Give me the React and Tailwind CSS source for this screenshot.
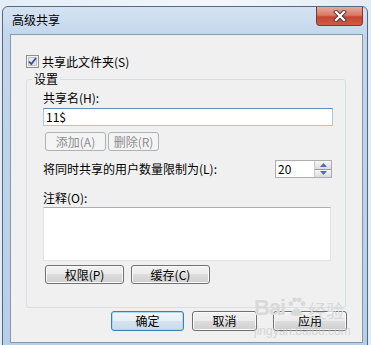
import React from 'react';

const grayBtn =
  'flex items-center justify-center rounded-[3px] border border-[#707070] bg-[linear-gradient(180deg,#f2f2f2_0%,#ebebeb_50%,#dddddd_50%,#cfcfcf_100%)] shadow-[inset_0_0_0_1px_#fbfbfb] text-[12px] leading-none text-black';

const disabledBtn =
  'flex items-center justify-center rounded-[3px] border border-[#adb2b5] bg-[#f4f4f4] text-[12px] leading-none text-[#8d8d8d]';

const CheckBox = () => (
  <svg width="13" height="13" viewBox="0 0 13 13">
    <rect x="0.5" y="0.5" width="12" height="12" fill="#f4f4f4" stroke="#8e8f8f" />
    <rect x="2.5" y="2.5" width="8" height="8" fill="#e6e6e6" stroke="#c4c4c4" />
    <path d="M3 6.5 L5.3 9 L10 3" fill="none" stroke="#3d4f95" strokeWidth="1.8" />
  </svg>
);

const CloseX = () => (
  <svg width="14" height="12" viewBox="0 0 14 12">
    <path d="M3 2 L11 10 M11 2 L3 10" stroke="#4a3a3a" strokeWidth="4.2" strokeLinecap="square" />
    <path d="M3 2 L11 10 M11 2 L3 10" stroke="#ffffff" strokeWidth="2.2" strokeLinecap="square" />
  </svg>
);

const Spinner = () => (
  <div className="flex w-[57px] h-[18px] border border-[#abadb3] bg-white">
    <div className="flex-1 flex items-center pl-[2px] text-[12px] leading-none">20</div>
    <div className="w-[17px] flex flex-col border-l border-[#c9c9c9] bg-[#e9e9e9]">
      <div className="flex-1 flex items-center justify-center border-b border-[#9a9a9a] bg-[linear-gradient(180deg,#f6f6f6,#dcdcdc)]">
        <svg width="7" height="4" viewBox="0 0 7 4"><path d="M0 4 L3.5 0 L7 4 Z" fill="#4d6fb3" /></svg>
      </div>
      <div className="flex-1 flex items-center justify-center bg-[linear-gradient(180deg,#f6f6f6,#dcdcdc)]">
        <svg width="7" height="4" viewBox="0 0 7 4"><path d="M0 0 L3.5 4 L7 0 Z" fill="#4d6fb3" /></svg>
      </div>
    </div>
  </div>
);

// baidu jingyan watermark, drawn over the bottom-right corner
const Watermark = () => (
  <div className="absolute left-[243px] top-[262px] flex flex-col items-start text-[#d9d9d9] pointer-events-none font-['Liberation_Sans',sans-serif]">
    <div className="flex items-end gap-[1px]">
      <span className="text-[22px] font-bold leading-none tracking-[-1px]">Bai</span>
      <svg width="21" height="21" viewBox="0 0 22 22" className="mb-[1px]">
        <circle cx="5" cy="7" r="2.5" fill="#d9d9d9" />
        <circle cx="9" cy="3" r="2.5" fill="#d9d9d9" />
        <circle cx="14" cy="3" r="2.5" fill="#d9d9d9" />
        <circle cx="18" cy="7" r="2.5" fill="#d9d9d9" />
        <path d="M4 18 Q11 6 18 18 Q11 22 4 18 Z" fill="#d9d9d9" />
      </svg>
      <span className="text-[18px] leading-none font-['Noto_Sans_CJK_SC',sans-serif]">经验</span>
    </div>
    <span className="text-[12px] leading-none mt-[6px] text-[#c9c9c9]/70">jingyan.baidu.com</span>
  </div>
);

export default function App() {
  return (
    <div className="w-[371px] h-[345px] overflow-hidden bg-[linear-gradient(90deg,#e4edf6,#f3f7fb_60%,#e2ecf5)] font-['Noto_Sans_CJK_SC',sans-serif]">
      <div className="ml-[2px] mt-[6px] w-[366px] h-[345px] rounded-t-[6px] border border-[#56697e] bg-[linear-gradient(180deg,#d4e3f2_0px,#c3d7ec_28px,#b6cfe9_100%)] pl-[7px] pr-[4px] flex flex-col">
        <div className="h-[27px] flex justify-between items-start">
          <span className="pl-[2px] pt-[6px] text-[12px] leading-[14px] text-black">高级共享</span>
          <div className="w-[47px] h-[19px] rounded-b-[4px] border border-t-0 border-[#7d3a31] bg-[linear-gradient(180deg,#e9a99a_0%,#d97a66_45%,#c64532_55%,#d05a44_100%)] flex items-center justify-center">
            <CloseX />
          </div>
        </div>

        <div className="relative h-[309px] border border-[#8598ae] bg-[#f0f0f0] text-[12px] leading-[14px] text-black">
          <div className="ml-[15px] mt-[20px] h-[13px] flex items-center gap-[3px]">
            <CheckBox />
            <span>共享此文件夹(S)</span>
          </div>

          <fieldset className="ml-[15px] mt-[4px] w-[320px] h-[236px] border border-[#d5dfe5] rounded-[3px]">
            <legend className="ml-[5px] px-[2px] leading-[14px]">设置</legend>
            <div className="pl-[16px] flex flex-col">
              <span className="mt-[5px]">共享名(H):</span>
              <div className="mt-[3px] w-[290px] h-[18px] border border-[#a9c6e3] border-t-[#5d8dbb] bg-white flex items-center pl-[2px]">
                11$
              </div>
              <div className="mt-[6px] ml-[2px] flex gap-[2px]">
                <div className={`${disabledBtn} w-[61px] h-[19px]`}>添加(A)</div>
                <div className={`${disabledBtn} w-[51px] h-[19px]`}>删除(R)</div>
              </div>
              <div className="mt-[9px] w-[289px] flex items-center justify-between">
                <span>将同时共享的用户数量限制为(L):</span>
                <Spinner />
              </div>
              <span className="mt-[13px]">注释(O):</span>
              <div className="mt-[2px] w-[288px] h-[54px] border border-[#e2e3ea] border-t-[#abadb3] bg-white" />
              <div className="mt-[4px] ml-[2px] flex gap-[7px]">
                <div className={`${grayBtn} w-[79px] h-[19px]`}>权限(P)</div>
                <div className={`${grayBtn} w-[79px] h-[19px]`}>缓存(C)</div>
              </div>
            </div>
          </fieldset>

          <div className="mt-[3px] ml-[100px] flex">
            <div className="w-[73px] h-[20px] rounded-[3px] border border-[#3c7fb1] bg-[linear-gradient(180deg,#f1f6fa_0%,#e6eff6_50%,#d6e3ee_50%,#cadbe9_100%)] shadow-[inset_0_0_0_1px_#a9daf5] flex items-center justify-center text-[12px] leading-none">
              确定
            </div>
            <div className={`${grayBtn} ml-[8px] w-[65px] h-[20px]`}>取消</div>
            <div className={`${grayBtn} ml-[16px] w-[74px] h-[20px]`}>应用</div>
          </div>

          <Watermark />
        </div>
      </div>
    </div>
  );
}
